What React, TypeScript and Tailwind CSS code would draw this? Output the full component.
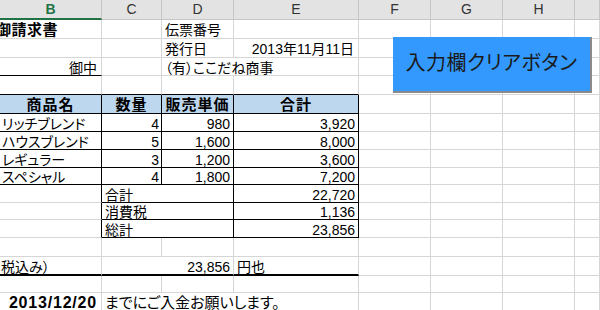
import React from "react";

type Side = "g" | "k" | "k2" | "none";

type CellProps = {
  children?: React.ReactNode;
  r?: Side;
  b?: Side;
  className?: string;
};

function Cell({ children, r = "g", b = "g", className = "" }: CellProps) {
  const rc =
    r === "k"
      ? "border-r border-r-black"
      : r === "none"
      ? ""
      : "border-r border-r-[#d6d6d6]";
  const bc =
    b === "k"
      ? "border-b border-b-black"
      : b === "k2"
      ? "border-b-2 border-b-black"
      : b === "none"
      ? ""
      : "border-b border-b-[#d6d6d6]";
  return (
    <div
      className={`${rc} ${bc} flex items-center min-w-0 whitespace-nowrap leading-[16px] pt-[2px] ${className}`}
    >
      {children}
    </div>
  );
}

function Blank({ n }: { n: number }) {
  return (
    <>
      {Array.from({ length: n }).map((_, i) => (
        <Cell key={i} />
      ))}
    </>
  );
}

function HeadCell({ label, active }: { label: string; active?: boolean }) {
  return (
    <div
      className={
        active
          ? "flex items-center justify-center bg-[#e3e3e3] border-r border-r-[#c6c6c6] border-b-2 border-b-[#217346] text-[#217346] font-bold text-[14px]"
          : "flex items-center justify-center bg-[#e3e3e3] border-r border-r-[#c6c6c6] border-b border-b-[#c6c6c6] text-[#333333] text-[14px]"
      }
    >
      {label}
    </div>
  );
}

const items = [
  { name: "リッチブレンド", qty: "4", price: "980", total: "3,920" },
  { name: "ハウスブレンド", qty: "5", price: "1,600", total: "8,000" },
  { name: "レギュラー", qty: "3", price: "1,200", total: "3,600" },
  { name: "スペシャル", qty: "4", price: "1,800", total: "7,200" },
];

const sums = [
  { label: "合計", value: "22,720" },
  { label: "消費税", value: "1,136" },
  { label: "総計", value: "23,856" },
];

export default function App() {
  return (
    <div className="relative w-[600px] h-[310px] overflow-hidden bg-white text-black text-[14px] font-['Liberation_Sans','Noto_Sans_CJK_JP',sans-serif] [font-feature-settings:'palt']">
      <div className="grid grid-cols-[102px_60px_72px_125px_72px_72px_72px_1fr] grid-rows-[20px_19px_19px_18px_19px_19px_18px_18px_18px_17px_18px_17px_18px_19px_19px_17px_18px]">
        {/* column headings */}
        <HeadCell label="B" active />
        <HeadCell label="C" />
        <HeadCell label="D" />
        <HeadCell label="E" />
        <HeadCell label="F" />
        <HeadCell label="G" />
        <HeadCell label="H" />
        <HeadCell label="" />

        {/* row 1 */}
        <Cell className="font-bold text-[15px] tracking-[0.5px] ml-[-4px] pl-0">御請求書</Cell>
        <Cell />
        <Cell className="pl-[3px]">伝票番号</Cell>
        <Cell />
        <Blank n={4} />

        {/* row 2 */}
        <Cell />
        <Cell />
        <Cell className="pl-[3px]">発行日</Cell>
        <Cell className="justify-end pr-[4px]">2013年11月11日</Cell>
        <Blank n={4} />

        {/* row 3 */}
        <Cell b="k" className="justify-end pr-[4px]">御中</Cell>
        <Cell />
        <Cell className="col-span-2 pl-[3px]">（有）ここだね商事</Cell>
        <Blank n={4} />

        {/* row 4 */}
        <Cell b="k" />
        <Cell b="k" />
        <Cell b="k" />
        <Cell b="k" />
        <Blank n={4} />

        {/* row 5: table heading */}
        {["商品名", "数量", "販売単価", "合計"].map((h) => (
          <Cell
            key={h}
            r="k"
            b="k"
            className="bg-[#bdd7ee] justify-center font-bold text-[15px] tracking-[1px]"
          >
            {h}
          </Cell>
        ))}
        <Blank n={4} />

        {/* rows 6-9: items */}
        {items.map((it) => (
          <React.Fragment key={it.name}>
            <Cell r="k" b="k" className="pl-[2px]">{it.name}</Cell>
            <Cell r="k" b="k" className="justify-end pr-[2px]">{it.qty}</Cell>
            <Cell r="k" b="k" className="justify-end pr-[3px]">{it.price}</Cell>
            <Cell r="k" b="k" className="justify-end pr-[3px]">{it.total}</Cell>
            <Blank n={4} />
          </React.Fragment>
        ))}

        {/* rows 10-12: totals */}
        {sums.map((s) => (
          <React.Fragment key={s.label}>
            <Cell r="k" />
            <Cell r="k" b="k" className="col-span-2 pl-[3px]">{s.label}</Cell>
            <Cell r="k" b="k" className="justify-end pr-[3px]">{s.value}</Cell>
            <Blank n={4} />
          </React.Fragment>
        ))}

        {/* row 13 */}
        <Blank n={8} />

        {/* row 14: amount due */}
        <Cell b="k2" className="pl-[1px]">税込み）</Cell>
        <Cell b="k2" className="col-span-2 justify-end pr-[3px]">23,856</Cell>
        <Cell b="k2" className="pl-[3px]">円也</Cell>
        <Blank n={4} />

        {/* row 15 */}
        <Blank n={8} />

        {/* row 16: due date */}
        <Cell className="justify-end pr-[4px] font-bold text-[16px] tracking-[0.8px]">2013/12/20</Cell>
        <Cell className="col-span-3 pl-[3px] text-[15px]">までにご入金お願いします。</Cell>
        <Blank n={4} />
      </div>

      {/* clear button over F:H */}
      <button
        type="button"
        className="absolute left-[393px] top-[37px] w-[199px] h-[56px] bg-[#3399ff] border-r-2 border-b-2 border-r-[#8a8a8a] border-b-[#8a8a8a] flex items-center justify-center pb-[3px] text-[20px] text-[#1a1a1a] tracking-[0.5px]"
      >
        入力欄クリアボタン
      </button>
    </div>
  );
}
